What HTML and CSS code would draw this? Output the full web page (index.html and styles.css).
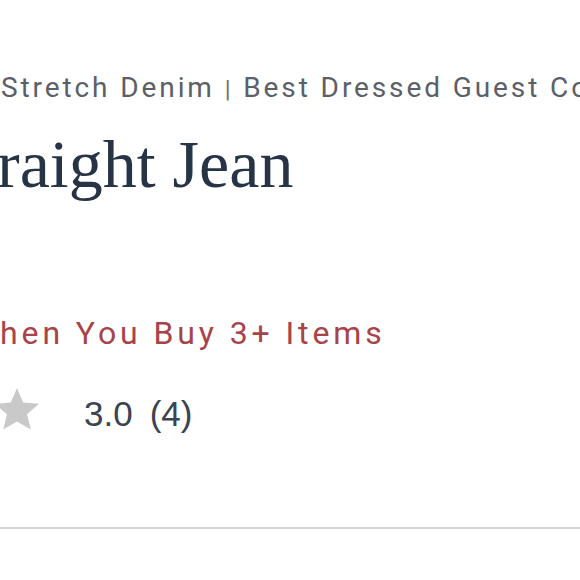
FILE: index.html
```html
<!DOCTYPE html>
<html>
<head>
<meta charset="utf-8">
<link rel="stylesheet" href="styles.css">
</head>
<body>
<main class="product">
  <p class="collection">Stretch Denim <span class="sep">|</span> Best Dressed Guest Collection</p>
  <h1 class="title"><span class="clip">St</span>raight Jean</h1>
  <p class="promo"><span class="clip">W</span>hen You Buy 3+ Items</p>
  <div class="rating">
    <div class="stars">
      <svg class="star" viewBox="0 0 24 24"><path d="M12 1.5l3.1 7.3 7.9.6-6 5.2 1.9 7.7L12 18.2l-6.9 4.1 1.9-7.7-6-5.2 7.9-.6z"/></svg>
    </div>
    <span class="score">3.0</span>
    <span class="count">(4)</span>
  </div>
  <hr class="divider">
</main>
</body>
</html>
```
FILE: styles.css
```css
html, body {
  margin: 0;
  padding: 0;
  background: #ffffff;
  overflow: hidden;
}
.product {
  width: 580px;
  height: 580px;
  overflow: hidden;
  padding-top: 70px;
  box-sizing: border-box;
}
.collection {
  margin: 0 0 0 1px;
  white-space: nowrap;
  font-family: Roboto, "Liberation Sans", sans-serif;
  font-size: 28px;
  line-height: 36px;
  letter-spacing: 2.9px;
  color: #5b6068;
}
.sep {
  font-size: 24px;
  color: #6b7078;
}
.title {
  margin: 17px 0 0 -3px;
  white-space: nowrap;
  font-family: "Liberation Serif", serif;
  font-weight: normal;
  font-size: 68px;
  line-height: 80px;
  color: #263446;
}
.clip {
  display: none;
}
.promo {
  margin: 109px 0 0 0;
  white-space: nowrap;
  font-family: Roboto, "Liberation Sans", sans-serif;
  font-size: 32px;
  line-height: 40px;
  letter-spacing: 3.9px;
  color: #a8434a;
}
.rating {
  display: flex;
  align-items: center;
  margin-top: 32px;
  height: 48px;
}
.stars {
  display: flex;
  margin-left: -7px;
  width: 48px;
}
.star {
  width: 48px;
  height: 48px;
  fill: #c9c9c9;
}
.score, .count {
  padding-top: 10px;
  font-family: "Liberation Sans", Arial, sans-serif;
  font-size: 35px;
  color: #3a4351;
}
.score {
  margin-left: 43px;
}
.count {
  margin-left: 17px;
}
.divider {
  margin: 94px 0 0 0;
  border: 0;
  height: 2px;
  background: #d4d4d4;
}
```
